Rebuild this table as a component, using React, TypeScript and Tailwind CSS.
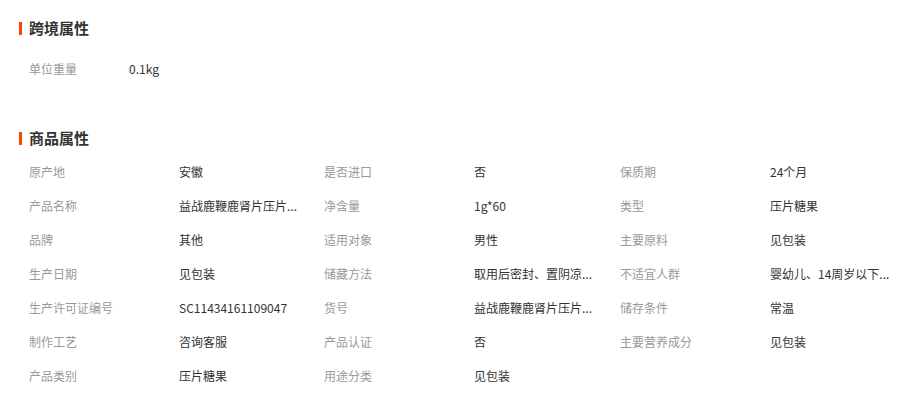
import React from "react";

const font = { fontFamily: '"Noto Sans CJK SC", "Noto Sans", sans-serif' };

const rows: [string, string][] = [
  ["原产地", "安徽"],
  ["是否进口", "否"],
  ["保质期", "24个月"],
  ["产品名称", "益战鹿鞭鹿肾片压片..."],
  ["净含量", "1g*60"],
  ["类型", "压片糖果"],
  ["品牌", "其他"],
  ["适用对象", "男性"],
  ["主要原料", "见包装"],
  ["生产日期", "见包装"],
  ["储藏方法", "取用后密封、置阴凉..."],
  ["不适宜人群", "婴幼儿、14周岁以下..."],
  ["生产许可证编号", "SC11434161109047"],
  ["货号", "益战鹿鞭鹿肾片压片..."],
  ["储存条件", "常温"],
  ["制作工艺", "咨询客服"],
  ["产品认证", "否"],
  ["主要营养成分", "见包装"],
  ["产品类别", "压片糖果"],
  ["用途分类", "见包装"],
];

function Title({ text }: { text: string }) {
  return (
    <div className="flex h-[18px] items-center">
      <div className="h-[13px] w-[3px] bg-[#ff4400]" />
      <div className="ml-[7px] text-[15px] font-bold leading-[18px] text-[#333]">{text}</div>
    </div>
  );
}

function Cell({ label, value, narrow = false }: { label: string; value: string; narrow?: boolean }) {
  return (
    <div className="flex h-[34px] items-center text-[12px] leading-[16px]">
      <div className={narrow ? "w-[100px] shrink-0 text-[#999]" : "w-[150px] shrink-0 text-[#999]"}>{label}</div>
      <div className="whitespace-nowrap text-[#333]">{value}</div>
    </div>
  );
}

export default function App() {
  return (
    <div className="min-h-[393px] w-[905px] bg-white pl-[19px] pt-[19px]" style={font}>
      <Title text="跨境属性" />
      <div className="mt-[15px] pl-[10px]">
        <Cell label="单位重量" value="0.1kg" narrow />
      </div>
      <div className="mt-[43px]">
        <Title text="商品属性" />
      </div>
      <div className="mt-[8px] grid grid-cols-[295px_296px_296px] pl-[10px]">
        {rows.map(([l, v], i) => (
          <Cell key={i} label={l} value={v} />
        ))}
      </div>
    </div>
  );
}
